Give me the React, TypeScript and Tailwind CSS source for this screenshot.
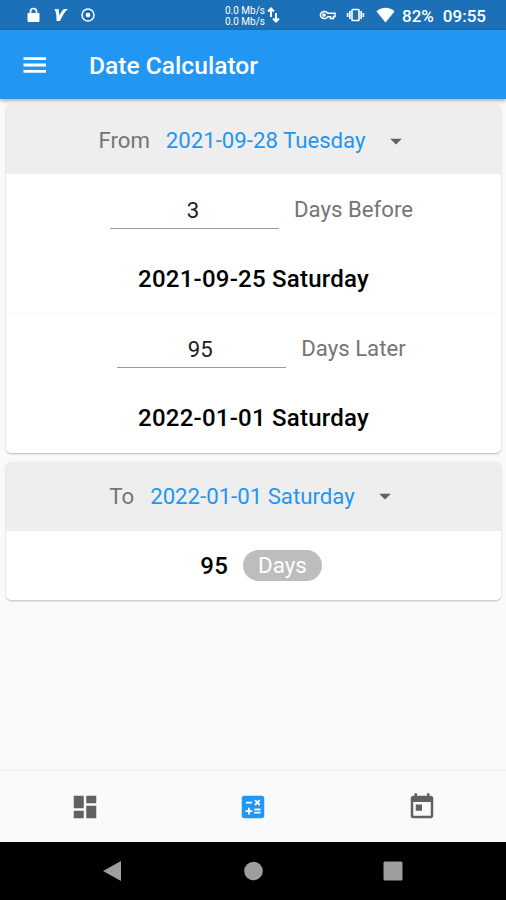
import { useState } from "react";
import type { ReactNode } from "react";
import { MdArrowDropDown, MdCalculate, MdDashboard, MdToday } from "react-icons/md";

const cardClass = "overflow-hidden rounded-[5px] bg-white shadow-[0_1px_2px_rgba(0,0,0,0.25)]";
const resultClass = "text-[24px] font-medium leading-[28px] tracking-[0.23px] text-black";

function StatusBar() {
  return (
    <div className="flex h-[30px] shrink-0 items-center bg-[#1b70b7] text-white">
      <div className="flex w-[225px] items-center pl-[27px]">
        <svg width="13" height="16" viewBox="0 0 13 16">
          <path d="M3.500 7V4.500a3 3 0 0 1 6 0V7" fill="none" stroke="currentColor" strokeWidth="1.700" />
          <rect x="0.500" y="6" width="12" height="9" rx="1" fill="currentColor" />
        </svg>
        <svg className="ml-[13px]" width="16" height="16" viewBox="0 0 16 16" fill="currentColor">
          <path d="M1.500 2H5.500L6.500 8.500C8 5.500 9.500 3 11 2H15C11.500 5 9.500 8.500 7 14H3.500C3.500 9.500 3.500 5.500 1.500 2Z" />
        </svg>
        <svg className="ml-[11px]" width="16" height="16" viewBox="0 0 16 16">
          <circle cx="8" cy="8" r="6" fill="none" stroke="currentColor" strokeWidth="1.500" />
          <circle cx="8" cy="8" r="2.300" fill="currentColor" />
        </svg>
      </div>
      <div className="w-[41px] whitespace-nowrap pt-px text-[10px] leading-[11px]">
        <div>0.0 Mb/s</div>
        <div>0.0 Mb/s</div>
      </div>
      <svg width="14" height="18" viewBox="0 0 14 18" fill="none" stroke="currentColor" strokeWidth="2">
        <path d="M5 11V3M2 5.500l3-3 3 3M10 7v8M7 12.500l3 3 3-3" />
      </svg>
      <svg className="ml-[39px]" width="17" height="12" viewBox="0 0 17 12" fill="none" stroke="currentColor" strokeWidth="1.500">
        <path d="M8.800 4.200A4 3.500 0 1 0 8.800 7.800H11.500V9.500H14.500V7.500H16V4.200Z" />
        <circle cx="5" cy="6" r="1.100" />
      </svg>
      <svg className="ml-[10px]" width="19" height="14" viewBox="0 0 19 14">
        <rect x="6" y="1.500" width="7" height="11" rx="0.800" fill="none" stroke="currentColor" strokeWidth="1.600" />
        <path d="M3 3h1.700v8H3zM14.300 3H16v8h-1.700zM0.800 5h1.700v4H0.800zM16.500 5h1.700v4h-1.700z" fill="currentColor" />
      </svg>
      <svg className="ml-[11px]" width="19" height="16" viewBox="0 0 19 16" fill="currentColor">
        <path d="M0.500 4.500C5-0.500 14-0.500 18.500 4.500L9.500 15.500Z" />
      </svg>
      <span className="ml-[7px] pt-[2px] text-[17px] font-medium leading-5">82%</span>
      <span className="ml-[9px] pt-[2px] text-[17px] font-medium leading-5">09:55</span>
    </div>
  );
}

function DateHeader({ label, date }: { label: string; date: string }) {
  return (
    <div className="flex h-full items-center justify-center pl-px text-[22.2px]">
      <span className="text-[#757575]">{label}</span>
      <button type="button" className="ml-4 flex items-center text-[#2196f3]">
        {date}
        <MdArrowDropDown size={28} className="ml-4 text-[#616161]" />
      </button>
    </div>
  );
}

function OffsetRow({ initial, label, result }: { initial: string; label: string; result: string }) {
  const [value, setValue] = useState(initial);
  return (
    <div className="flex h-[139px] flex-col items-center">
      <div className="mt-[14px] flex h-[41px] items-start pl-4">
        <input
          value={value}
          onChange={(e) => setValue(e.target.value)}
          className="h-[41px] w-[169px] border-b border-[#9a9a9a] pr-[3px] pt-1 text-center text-[22.2px] text-[#212121] outline-none"
        />
        <span className="ml-[15px] pt-2 text-[22.2px] leading-[26px] text-[#757575]">{label}</span>
      </div>
      <div className={`mt-9 ${resultClass}`}>{result}</div>
    </div>
  );
}

function NavItem({ children, active }: { children: ReactNode; active?: boolean }) {
  return (
    <button
      type="button"
      className={`flex flex-1 items-center justify-center ${active ? "text-[#2196f3]" : "text-[#616161]"}`}
    >
      {children}
    </button>
  );
}

export default function App() {
  return (
    <div className="flex h-[900px] w-[506px] flex-col overflow-hidden bg-[#fafafa] font-[Roboto,sans-serif]">
      <StatusBar />
      <header className="z-10 flex h-[69px] shrink-0 items-center bg-[#2196f3] pl-[23px] text-white shadow-[0_2px_4px_rgba(0,0,0,0.3)]">
        <svg width="24" height="18" viewBox="0 0 24 18" fill="currentColor">
          <path d="M0.500 1.200h22.500v2.800H0.500zM0.500 7.600h22.500v2.800H0.500zM0.500 14h22.500v2.800H0.500z" />
        </svg>
        <h1 className="ml-[42px] pt-[3px] text-[24.6px] font-medium leading-8">Date Calculator</h1>
      </header>

      <main className="flex flex-1 flex-col gap-[9px] pl-[6px] pr-[5px] pt-[5px]">
        <section className={cardClass}>
          <div className="h-[70px] bg-[#eeeeee] pt-1">
            <DateHeader label="From" date="2021-09-28 Tuesday" />
          </div>
          <OffsetRow initial="3" label="Days Before" result="2021-09-25 Saturday" />
          <div className="-mb-px h-px bg-[#f7f7f7]" />
          <OffsetRow initial="95" label="Days Later" result="2022-01-01 Saturday" />
          <div className="h-px" />
        </section>

        <section className={cardClass}>
          <div className="h-[69px] bg-[#eeeeee]">
            <DateHeader label="To" date="2022-01-01 Saturday" />
          </div>
          <div className="flex h-[69px] items-center justify-center pl-[15px]">
            <span className="text-[24px] font-medium tracking-[0.23px] text-black">95</span>
            <span className="ml-[15px] flex h-[31px] items-center rounded-full bg-[#bdbdbd] px-[15px] text-[22.3px] text-white">
              Days
            </span>
          </div>
        </section>
      </main>

      <nav className="flex h-[72px] shrink-0 border-t border-[#eeeeee] bg-[#fafafa] pl-px">
        <NavItem>
          <MdDashboard size={30} />
        </NavItem>
        <NavItem active>
          <MdCalculate size={30} />
        </NavItem>
        <NavItem>
          <MdToday size={30} />
        </NavItem>
      </nav>

      <div className="flex h-[58px] shrink-0 items-center justify-center gap-[120px] bg-black text-[#9e9e9e]">
        <svg width="20" height="22" viewBox="0 0 20 22" fill="currentColor">
          <path d="M0 11L18 1V21Z" />
        </svg>
        <svg width="20" height="20" viewBox="0 0 20 20" fill="currentColor">
          <circle cx="10.500" cy="10" r="9.300" />
        </svg>
        <svg width="20" height="20" viewBox="0 0 20 20" fill="currentColor">
          <rect x="0.500" y="0.500" width="19" height="19" rx="1.500" />
        </svg>
      </div>
    </div>
  );
}
